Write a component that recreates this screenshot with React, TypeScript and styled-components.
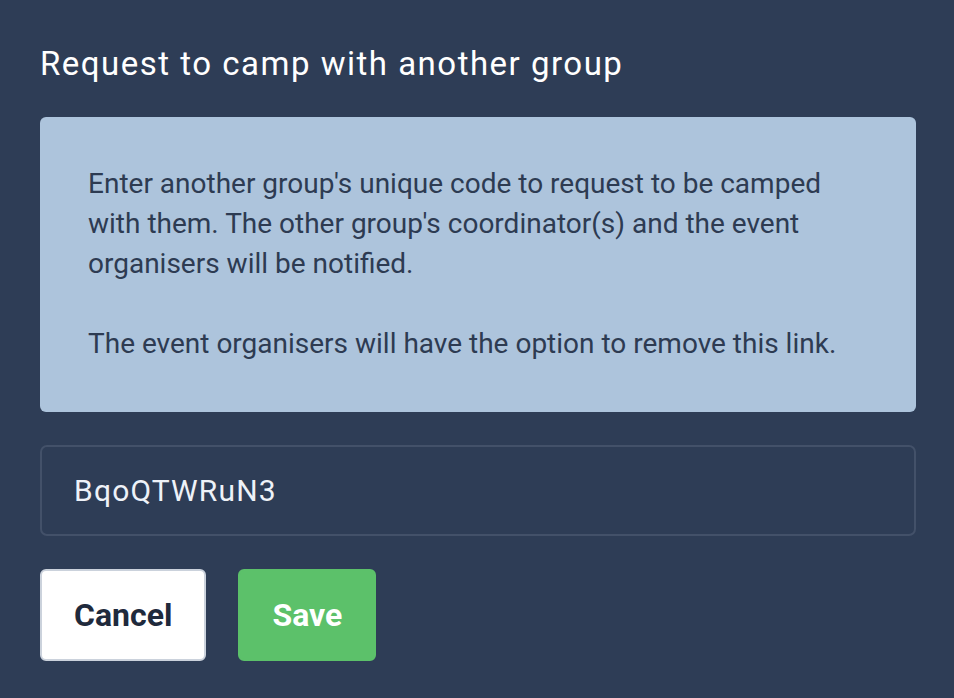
import React from "react";
import styled, { createGlobalStyle } from "styled-components";

const Global = createGlobalStyle`
  html, body {
    margin: 0;
    padding: 0;
    background: #2e3d56;
    font-family: Roboto, "Noto Sans", "Liberation Sans", sans-serif;
  }
  * { box-sizing: border-box; }
`;

const Dialog = styled.div`
  width: 954px;
  height: 698px;
  background: #2e3d56;
  padding: 44px 38px 0 40px;
  display: flex;
  flex-direction: column;
`;

const Title = styled.h1`
  margin: 0;
  font-size: 33px;
  line-height: 40px;
  letter-spacing: 1.5px;
  font-weight: 400;
  color: #ffffff;
`;

const InfoBox = styled.div`
  margin-top: 33px;
  background: #adc4dc;
  border-radius: 6px;
  padding: 47px 48px 48px 48px;
  color: #2d3b52;
  font-size: 28px;
  line-height: 40px;
`;

const Para = styled.p`
  margin: 0;
  & + & {
    margin-top: 40px;
  }
`;

const CodeInput = styled.input`
  margin-top: 33px;
  height: 91px;
  width: 100%;
  background: transparent;
  border: 2px solid #435169;
  border-radius: 7px;
  padding: 0 32px;
  font-family: inherit;
  font-size: 30px;
  letter-spacing: 1.2px;
  color: #eef2f8;
  outline: none;
`;

const Actions = styled.div`
  margin-top: 33px;
  display: flex;
  gap: 32px;
`;

const Button = styled.button<{ $primary?: boolean }>`
  height: 92px;
  padding: 0 32px;
  border-radius: 6px;
  font-family: inherit;
  font-size: 32px;
  font-weight: 700;
  cursor: pointer;
  background: ${(p) => (p.$primary ? "#5cc16a" : "#ffffff")};
  color: ${(p) => (p.$primary ? "#ffffff" : "#1f2a3c")};
  border: 2px solid ${(p) => (p.$primary ? "#5cc16a" : "#cbd2dc")};
`;

export default function App() {
  return (
    <>
      <Global />
      <Dialog>
        <Title>Request to camp with another group</Title>
        <InfoBox>
          <Para>
            Enter another group's unique code to request to be camped with
            them. The other group's coordinator(s) and the event organisers
            will be notified.
          </Para>
          <Para>The event organisers will have the option to remove this link.</Para>
        </InfoBox>
        <CodeInput defaultValue="BqoQTWRuN3" />
        <Actions>
          <Button>Cancel</Button>
          <Button $primary>Save</Button>
        </Actions>
      </Dialog>
    </>
  );
}
